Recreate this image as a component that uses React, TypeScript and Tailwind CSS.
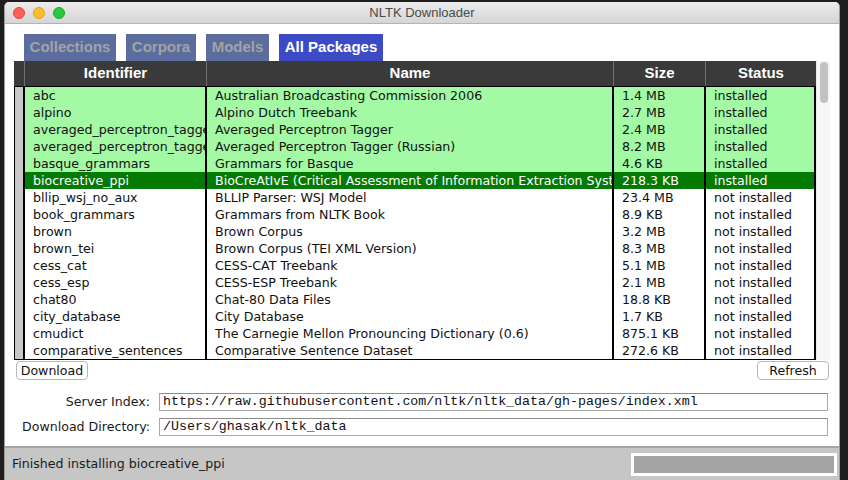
import React from "react";

type Pkg = { id: string; name: string; size: string; installed: boolean };

const packages: Pkg[] = [
  { id: "abc", name: "Australian Broadcasting Commission 2006", size: "1.4 MB", installed: true },
  { id: "alpino", name: "Alpino Dutch Treebank", size: "2.7 MB", installed: true },
  { id: "averaged_perceptron_tagger", name: "Averaged Perceptron Tagger", size: "2.4 MB", installed: true },
  { id: "averaged_perceptron_tagger_ru", name: "Averaged Perceptron Tagger (Russian)", size: "8.2 MB", installed: true },
  { id: "basque_grammars", name: "Grammars for Basque", size: "4.6 KB", installed: true },
  {
    id: "biocreative_ppi",
    name: "BioCreAtIvE (Critical Assessment of Information Extraction Systems in Biology)",
    size: "218.3 KB",
    installed: true,
  },
  { id: "bllip_wsj_no_aux", name: "BLLIP Parser: WSJ Model", size: "23.4 MB", installed: false },
  { id: "book_grammars", name: "Grammars from NLTK Book", size: "8.9 KB", installed: false },
  { id: "brown", name: "Brown Corpus", size: "3.2 MB", installed: false },
  { id: "brown_tei", name: "Brown Corpus (TEI XML Version)", size: "8.3 MB", installed: false },
  { id: "cess_cat", name: "CESS-CAT Treebank", size: "5.1 MB", installed: false },
  { id: "cess_esp", name: "CESS-ESP Treebank", size: "2.1 MB", installed: false },
  { id: "chat80", name: "Chat-80 Data Files", size: "18.8 KB", installed: false },
  { id: "city_database", name: "City Database", size: "1.7 KB", installed: false },
  { id: "cmudict", name: "The Carnegie Mellon Pronouncing Dictionary (0.6)", size: "875.1 KB", installed: false },
  { id: "comparative_sentences", name: "Comparative Sentence Dataset", size: "272.6 KB", installed: false },
];

const SELECTED = "biocreative_ppi";

const tabs = [
  { label: "Collections", w: "w-[92px]", active: false },
  { label: "Corpora", w: "w-[70px]", active: false },
  { label: "Models", w: "w-[63px]", active: false },
  { label: "All Packages", w: "w-[104px]", active: true },
];

function TrafficLights() {
  return (
    <div className="absolute left-[8px] top-[5px] flex gap-[8px]">
      <span className="w-[12px] h-[12px] rounded-full bg-[#fe5f57] border border-[#e0443e]" />
      <span className="w-[12px] h-[12px] rounded-full bg-[#febc2e] border border-[#dea123]" />
      <span className="w-[12px] h-[12px] rounded-full bg-[#28c840] border border-[#1aab29]" />
    </div>
  );
}

function PackageTable() {
  return (
    <div className="flex">
      <div className="w-[802px]">
        {/* header */}
        <div className="flex h-[26px] bg-[#3a3a3a] border-b border-black text-white font-bold text-[15px] leading-[24px]">
          <div className="w-[11px] border-r border-[#6e6e6e]" />
          <div className="w-[182px] border-r border-[#6e6e6e] text-center">Identifier</div>
          <div className="w-[407px] border-r border-[#6e6e6e] text-center">Name</div>
          <div className="w-[92px] border-r border-[#6e6e6e] text-center">Size</div>
          <div className="w-[110px] text-center">Status</div>
        </div>
        {/* rows */}
        <div className="border-l border-b border-black font-['DejaVu_Sans',sans-serif] text-[12.6px] leading-[17px]">
          {packages.map((p) => {
            const sel = p.id === SELECTED;
            const rowCls = sel
              ? "bg-[#037a03] text-white"
              : p.installed
              ? "bg-[#a4f9a4] text-[#111]"
              : "bg-white text-[#111]";
            return (
              <div key={p.id} className={`flex h-[17px] ${rowCls}`}>
                <div className="w-[10px] bg-[#c8c8c8] border-r-2 border-black" />
                <div className="w-[182px] pl-[8px] border-r-2 border-black whitespace-nowrap overflow-hidden">
                  {p.id}
                </div>
                <div className="w-[407px] pl-[8px] border-r-2 border-black whitespace-nowrap overflow-hidden">
                  {p.name}
                </div>
                <div className="w-[92px] pl-[8px] border-r-2 border-black whitespace-nowrap overflow-hidden">
                  {p.size}
                </div>
                <div className="w-[110px] pl-[8px] border-r-2 border-black whitespace-nowrap overflow-hidden">
                  {p.installed ? "installed" : "not installed"}
                </div>
              </div>
            );
          })}
        </div>
      </div>
      {/* scrollbar */}
      <div className="w-[14px] bg-[#f6f6f6] border-l border-[#e8e8e8] pt-[1px] pl-[3px]">
        <div className="w-[8px] h-[41px] rounded-full bg-[#c2c2c2]" />
      </div>
    </div>
  );
}

function Field({ label, value }: { label: string; value: string }) {
  return (
    <div className="flex items-center h-[18px]">
      <div className="w-[136px] text-right font-['DejaVu_Sans',sans-serif] text-[12.6px] text-[#1a1a1a] whitespace-nowrap">
        {label}
      </div>
      <div className="ml-[9px] w-[669px] h-[18px] bg-white border border-[#a9a9a9] border-t-[#8c8c8c] pl-[3px] font-['Liberation_Mono',monospace] text-[13.3px] leading-[16px] text-[#111] whitespace-nowrap overflow-hidden">
        {value}
      </div>
    </div>
  );
}

export default function App() {
  return (
    <div className="w-[848px] h-[480px] bg-[#1e1e1e] pl-[4px] pr-[8px] pt-[2px] overflow-hidden font-['Liberation_Sans',Arial,sans-serif]">
      <div className="h-[478px] flex flex-col rounded-t-[5px] overflow-hidden bg-white border-x border-[#9c9c9c]">
        {/* title bar */}
        <div className="relative h-[22px] shrink-0 bg-gradient-to-b from-[#ececec] to-[#d5d5d5] border-b border-[#b4b4b4] flex items-center justify-center">
          <TrafficLights />
          <span className="text-[13px] text-[#4a4a4a]">NLTK Downloader</span>
        </div>

        {/* content */}
        <div className="flex-1 flex flex-col pl-[9px] pr-[9px] pt-[10px]">
          <div className="flex gap-[10px] ml-[10px] h-[27px]">
            {tabs.map((t) => (
              <div
                key={t.label}
                className={`${t.w} h-[27px] flex items-center justify-center font-bold text-[15px] ${
                  t.active ? "bg-[#3c4bc5] text-white" : "bg-[#5b6c9e] text-[#a3a3a3]"
                }`}
              >
                {t.label}
              </div>
            ))}
          </div>

          <PackageTable />

          <div className="flex justify-between mt-[1px] pl-[2px] pr-[1px] font-['DejaVu_Sans',sans-serif] text-[12.6px]">
            <button className="w-[72px] h-[19px] bg-white border border-[#b8b8b8] rounded-[4px] leading-[17px] text-[#111]">
              Download
            </button>
            <button className="w-[72px] h-[19px] bg-white border border-[#b8b8b8] rounded-[4px] leading-[17px] text-[#111]">
              Refresh
            </button>
          </div>

          <div className="flex flex-col gap-[7px] mt-[13px]">
            <Field
              label="Server Index:"
              value="https://raw.githubusercontent.com/nltk/nltk_data/gh-pages/index.xml"
            />
            <Field label="Download Directory:" value="/Users/ghasak/nltk_data" />
          </div>
        </div>

        {/* status bar */}
        <div className="h-[34px] shrink-0 bg-[#c6c6c6] border-t-2 border-[#a4a4a4] flex items-center justify-between pl-[7px] pr-[2px]">
          <span className="font-['DejaVu_Sans',sans-serif] text-[12.6px] text-[#1a1a1a]">
            Finished installing biocreative_ppi
          </span>
          <div className="w-[206px] h-[23px] border-[3px] border-white bg-[#a3a3a3]" />
        </div>
      </div>
    </div>
  );
}
